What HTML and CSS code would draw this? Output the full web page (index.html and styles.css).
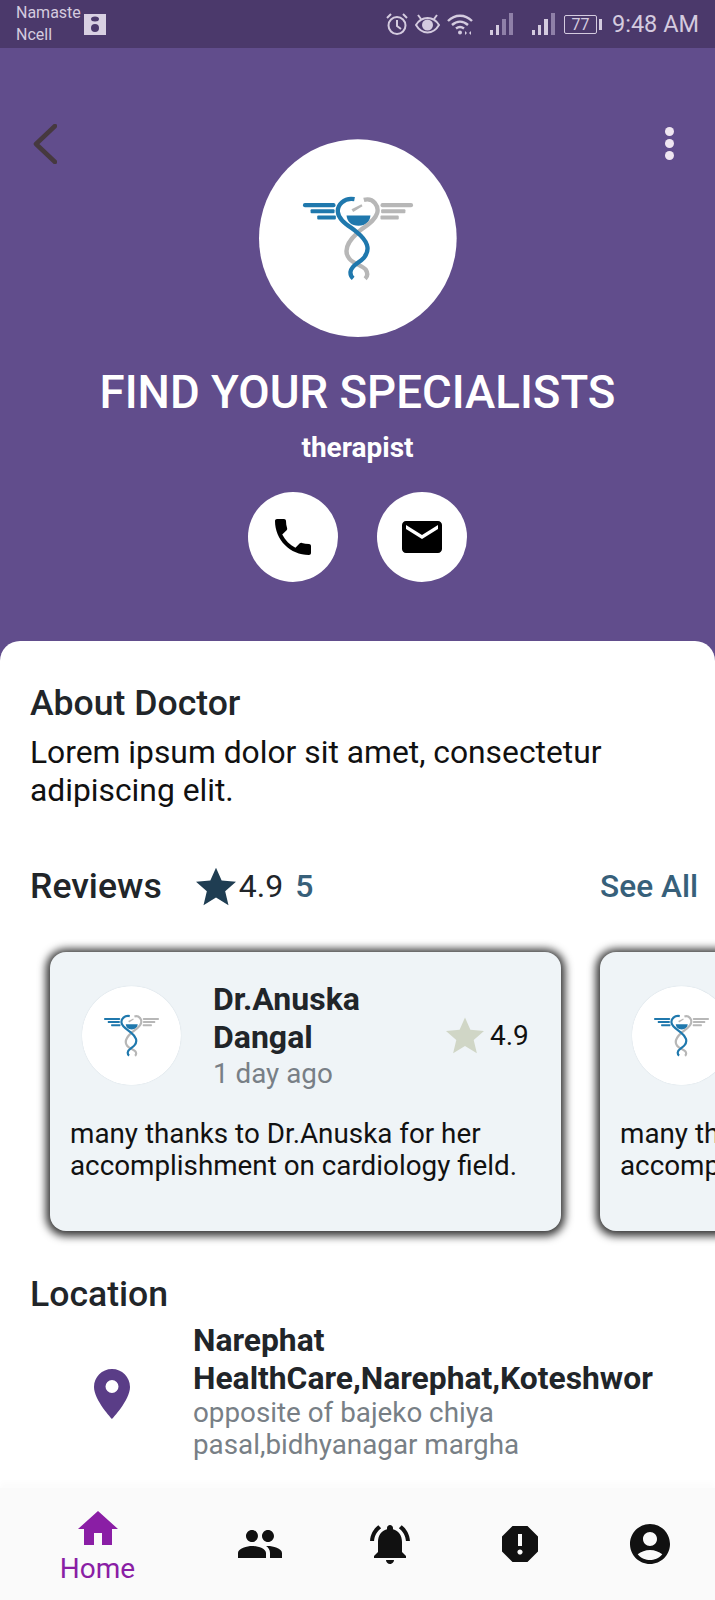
FILE: index.html
```html
<!DOCTYPE html>
<html lang="en">
<head>
    <meta charset="UTF-8">
    <meta name="viewport" content="width=device-width, initial-scale=1.0">
    <title>Find Your Specialists</title>
    <link rel="stylesheet" href="styles.css">
</head>
<body>
    <svg class="defs" width="0" height="0">
        <symbol id="logo" viewBox="25 27 595 595">
            <circle cx="322" cy="325" r="297" fill="#fff"/>
            <g fill="#1f78ad">
                <rect x="157" y="219" width="98" height="13" rx="6"/>
                <rect x="180" y="238" width="72" height="12" rx="3"/>
                <rect x="200" y="257" width="56" height="12" rx="3"/>
                <path d="M288 257h72c-2 18-14 31-36 31s-34-13-36-31z"/>
            </g>
            <g fill="#b7b7b7">
                <rect x="390" y="219" width="98" height="13" rx="6"/>
                <rect x="392" y="238" width="73" height="12" rx="3"/>
                <rect x="390" y="257" width="55" height="12" rx="3"/>
                <path d="M303 238l30-15 3 6-28 17z"/>
            </g>
            <path d="M340 210c30-8 46 20 40 40-8 28-40 40-60 60-26 24-44 50-24 76 14 18 40 20 50 34 7 11 5 20-2 27" fill="none" stroke="#b7b7b7" stroke-width="13"/>
            <path d="M312 208c-32-6-52 18-50 38 2 26 34 42 56 60 32 26 44 52 22 78-14 16-38 22-40 42-1 10 3 16 8 20" fill="none" stroke="#1f78ad" stroke-width="13"/>
        </symbol>
    </svg>

    <div class="status-bar">
        <div class="carrier">Namaste<br>Ncell</div>
        <svg class="sim" viewBox="0 0 22 21">
            <rect width="22" height="21" fill="#d8d0e2"/>
            <ellipse cx="11" cy="5" rx="4" ry="2.5" fill="#4b396b"/>
            <circle cx="11" cy="14" r="4" fill="#4b396b"/>
        </svg>
        <div class="status-icons">
            <svg class="st-alarm" viewBox="0 0 22 22" fill="none" stroke="#d4cbdf" stroke-width="2">
                <circle cx="11" cy="12.5" r="8.5"/>
                <path d="M11 7v6l4 3M1 5l4-4M21 5l-4-4"/>
            </svg>
            <svg class="st-eye" viewBox="0 0 25 20" fill="none" stroke="#d4cbdf" stroke-width="2">
                <path d="M1 11c3-5 7-7 11.500-7s8.500 2 11.500 7c-3 5-7 7.500-11.500 7.500S4 16 1 11z"/>
                <circle cx="12.500" cy="11" r="4.500" fill="#d4cbdf"/>
                <path d="M3 1l3 4M22 1l-3 4"/>
            </svg>
            <svg class="st-wifi" viewBox="0 0 26 21" fill="none" stroke="#d4cbdf" stroke-width="2.400">
                <path d="M1 7c7-7 17-7 24 0M5 11c5-4.500 11-4.500 16 0M9 14.500c2.500-2 5.500-2 8 0"/>
                <circle cx="13" cy="18.500" r="2" fill="#d4cbdf" stroke="none"/>
                <path d="M18 21v-4l2 2-2 2zM24 17v4l-2-2 2-2z" fill="#d4cbdf" stroke="none"/>
            </svg>
            <svg class="st-signal" viewBox="0 0 23 22">
                <rect x="0" y="17" width="3" height="5" fill="#d4cbdf"/>
                <rect x="6" y="12" width="3" height="10" fill="#d4cbdf"/>
                <rect x="12" y="6" width="4" height="16" fill="#8f80a8"/>
                <rect x="19" y="0" width="4" height="22" fill="#8f80a8"/>
            </svg>
            <svg class="st-signal st-signal-two" viewBox="0 0 23 22">
                <rect x="0" y="17" width="3" height="5" fill="#d4cbdf"/>
                <rect x="6" y="12" width="3" height="10" fill="#d4cbdf"/>
                <rect x="12" y="6" width="4" height="16" fill="#d4cbdf"/>
                <rect x="19" y="0" width="4" height="22" fill="#8f80a8"/>
            </svg>
            <div class="battery"><span class="battery-level">77</span><span class="battery-tip"></span></div>
            <span class="clock">9:48 AM</span>
        </div>
    </div>

    <header class="profile">
        <div class="profile-top">
            <svg class="back" viewBox="0 0 24 40" fill="none" stroke="#46393f" stroke-width="4.500" stroke-linecap="round" stroke-linejoin="round">
                <path d="M22 2L3 20l19 18"/>
            </svg>
            <svg class="avatar-big"><use href="#logo"/></svg>
            <div class="more"><span></span><span></span><span></span></div>
        </div>
        <h1>FIND YOUR SPECIALISTS</h1>
        <p class="role">therapist</p>
        <div class="actions">
            <div class="action">
                <svg viewBox="0 0 24 24"><path d="M6.620 10.790c1.440 2.830 3.760 5.140 6.590 6.590l2.200-2.200c.27-.27.67-.36 1.020-.24 1.120.37 2.330.57 3.570.57.55 0 1 .45 1 1V20c0 .55-.45 1-1 1-9.390 0-17-7.610-17-17 0-.55.45-1 1-1h3.500c.55 0 1 .45 1 1 0 1.250.2 2.450.57 3.570.11.35.03.74-.25 1.020l-2.200 2.200z"/></svg>
            </div>
            <div class="action">
                <svg viewBox="0 0 24 24"><path d="M20 4H4c-1.100 0-1.990.9-1.990 2L2 18c0 1.100.9 2 2 2h16c1.100 0 2-.9 2-2V6c0-1.100-.9-2-2-2zm0 4l-8 5-8-5V6l8 5 8-5v2z"/></svg>
            </div>
        </div>
    </header>

    <main class="sheet">
        <section class="about">
            <h2>About Doctor</h2>
            <p>Lorem ipsum dolor sit amet, consectetur adipiscing elit.</p>
        </section>

        <section class="reviews-head">
            <h2>Reviews</h2>
            <svg class="star-big" viewBox="0 0 24 24"><path d="M12 1l3.400 7.700 8.600.8-6.500 5.600 2 8.400L12 18.900l-7.500 4.600 2-8.400L0 9.500l8.600-.8z"/></svg>
            <span class="rating">4.9</span>
            <span class="count">5</span>
            <a class="see-all">See All</a>
        </section>

        <section class="cards">
            <article class="card">
                <div class="card-top">
                    <svg class="avatar-small"><use href="#logo"/></svg>
                    <div class="card-who">
                        <div class="card-name">Dr.Anuska Dangal</div>
                        <div class="card-when">1 day ago</div>
                    </div>
                    <svg class="star-small" viewBox="0 0 24 24"><path d="M12 1l3.400 7.700 8.600.8-6.500 5.600 2 8.400L12 18.900l-7.500 4.600 2-8.400L0 9.500l8.600-.8z"/></svg>
                    <span class="card-rating">4.9</span>
                </div>
                <p class="card-text">many thanks to Dr.Anuska for her accomplishment on cardiology field.</p>
            </article>
            <article class="card">
                <div class="card-top">
                    <svg class="avatar-small"><use href="#logo"/></svg>
                    <div class="card-who">
                        <div class="card-name">Dr.Anuska Dangal</div>
                        <div class="card-when">1 day ago</div>
                    </div>
                    <svg class="star-small" viewBox="0 0 24 24"><path d="M12 1l3.400 7.700 8.600.8-6.500 5.600 2 8.400L12 18.900l-7.500 4.600 2-8.400L0 9.500l8.600-.8z"/></svg>
                    <span class="card-rating">4.9</span>
                </div>
                <p class="card-text">many thanks to Dr.Anuska for her accomplishment on cardiology field.</p>
            </article>
        </section>

        <section class="location">
            <h2>Location</h2>
            <div class="place">
                <svg class="pin" viewBox="0 0 36 50"><path fill-rule="evenodd" d="M18 0C8 0 0 8 0 18c0 13 18 32 18 32s18-19 18-32C36 8 28 0 18 0zm0 24a6.500 6.500 0 1 1 0-13 6.500 6.500 0 0 1 0 13z"/></svg>
                <div class="place-text">
                    <div class="place-name">Narephat HealthCare,Narephat,Koteshwor</div>
                    <div class="place-sub">opposite of bajeko chiya pasal,bidhyanagar margha</div>
                </div>
            </div>
        </section>
    </main>

    <nav class="tabs">
        <div class="tab tab-active">
            <svg viewBox="0 0 24 24"><path d="M10 20v-6h4v6h5v-8h3L12 3 2 12h3v8z"/></svg>
            <span>Home</span>
        </div>
        <div class="tab">
            <svg viewBox="0 0 24 24"><path d="M16 11c1.660 0 2.990-1.340 2.990-3S17.660 5 16 5c-1.660 0-3 1.340-3 3s1.340 3 3 3zm-8 0c1.660 0 2.990-1.340 2.990-3S9.660 5 8 5C6.340 5 5 6.340 5 8s1.340 3 3 3zm0 2c-2.330 0-7 1.170-7 3.500V19h14v-2.500c0-2.330-4.670-3.500-7-3.500zm8 0c-.29 0-.62.02-.97.05 1.160.84 1.970 1.970 1.970 3.450V19h6v-2.500c0-2.330-4.670-3.500-7-3.500z"/></svg>
        </div>
        <div class="tab">
            <svg viewBox="0 0 24 24"><path d="M7.580 4.080L6.150 2.650C3.750 4.480 2.170 7.300 2.030 10.500h2c.15-2.650 1.510-4.970 3.550-6.420zm12.390 6.420h2c-.15-3.200-1.730-6.020-4.120-7.850l-1.420 1.430c2.020 1.450 3.390 3.770 3.540 6.420zM18 11c0-3.070-1.640-5.640-4.500-6.320V4c0-.83-.67-1.500-1.500-1.500s-1.500.67-1.500 1.500v.68C7.630 5.360 6 7.920 6 11v5l-2 2v1h16v-1l-2-2v-5zm-6 11c.14 0 .27-.01.4-.04.65-.14 1.180-.58 1.440-1.180.1-.24.15-.5.15-.78h-4c.01 1.100.9 2 2.010 2z"/></svg>
        </div>
        <div class="tab">
            <svg viewBox="0 0 24 24"><path d="M15.730 3H8.270L3 8.270v7.460L8.270 21h7.460L21 15.730V8.270L15.730 3zM12 17.300c-.72 0-1.300-.58-1.300-1.300 0-.72.58-1.300 1.300-1.300.72 0 1.300.58 1.300 1.300 0 .72-.58 1.300-1.300 1.300zm1-4.300h-2V7h2v6z"/></svg>
        </div>
        <div class="tab">
            <svg viewBox="0 0 24 24"><path d="M12 2C6.480 2 2 6.480 2 12s4.480 10 10 10 10-4.480 10-10S17.520 2 12 2zm0 4c1.930 0 3.500 1.570 3.500 3.500S13.930 13 12 13s-3.500-1.570-3.500-3.500S10.070 6 12 6zm0 14c-2.030 0-4.430-.82-6.140-2.880C7.550 15.800 9.680 15 12 15s4.450.8 6.140 2.120C16.430 19.180 14.030 20 12 20z"/></svg>
        </div>
    </nav>
</body>
</html>
```

FILE: styles.css
```css
* {
    box-sizing: border-box;
}
html, body {
    margin: 0;
    padding: 0;
}
body {
    width: 715px;
    height: 1600px;
    overflow: hidden;
    display: flex;
    flex-direction: column;
    font-family: Roboto, "Noto Sans", sans-serif;
    background-color: #fff;
    color: #212529;
}
.defs {
    position: absolute;
}

/* status bar */
.status-bar {
    height: 48px;
    flex: none;
    display: flex;
    align-items: center;
    padding: 0 16px;
    background-color: #4b396b;
    color: #d4cbdf;
}
.carrier {
    font-size: 16px;
    line-height: 22px;
}
.sim {
    width: 22px;
    height: 21px;
    margin-left: 3px;
}
.status-icons {
    margin-left: auto;
    display: flex;
    align-items: center;
}
.st-alarm {
    width: 22px;
    height: 22px;
}
.st-eye {
    width: 25px;
    height: 20px;
    margin-left: 7px;
}
.st-wifi {
    width: 26px;
    height: 21px;
    margin-left: 7px;
}
.st-signal {
    width: 23px;
    height: 22px;
    margin-left: 17px;
}
.st-signal-two {
    margin-left: 19px;
}
.battery {
    display: flex;
    align-items: center;
    margin-left: 9px;
}
.battery-level {
    width: 33px;
    height: 19px;
    border: 1px solid #d4cbdf;
    border-radius: 2px;
    font-size: 16px;
    line-height: 17px;
    text-align: center;
}
.battery-tip {
    width: 3px;
    height: 11px;
    margin-left: 2px;
    background-color: #d4cbdf;
}
.clock {
    margin-left: 10px;
    font-size: 23.500px;
}

/* purple header */
.profile {
    flex: none;
    height: 613px;
    padding-top: 76px;
    background-color: #614d8c;
    color: #fff;
    text-align: center;
}
.profile-top {
    display: grid;
    grid-template-columns: 1fr 198px 1fr;
    align-items: start;
    padding: 0 33px;
}
.back {
    width: 24px;
    height: 40px;
}
.avatar-big {
    grid-column: 2;
    width: 198px;
    height: 198px;
    margin-top: 15px;
}
.more {
    justify-self: end;
    display: flex;
    flex-direction: column;
    gap: 3px;
    margin: 3px 8px 0 0;
}
.more span {
    width: 9px;
    height: 9px;
    border-radius: 50%;
    background-color: #efe6f1;
}
.profile h1 {
    margin: 29px 0 0;
    font-size: 45.600px;
    line-height: 54px;
    font-weight: 500;
}
.role {
    margin: 13px 0 0;
    font-size: 28px;
    line-height: 30px;
    font-weight: 700;
}
.actions {
    display: flex;
    justify-content: center;
    gap: 39px;
    margin-top: 29px;
}
.action {
    width: 90px;
    height: 90px;
    border-radius: 50%;
    background-color: #fff;
    display: flex;
    align-items: center;
    justify-content: center;
}
.action svg {
    width: 48px;
    height: 48px;
}

/* white sheet */
.sheet {
    flex: 1;
    min-height: 0;
    margin-top: -20px;
    border-radius: 20px 20px 0 0;
    background-color: #fff;
    overflow: hidden;
}
h2 {
    margin: 0;
    font-size: 35.600px;
    line-height: 40px;
    font-weight: 500;
}
.about {
    padding: 42px 30px 0;
}
.about p {
    margin: 10px 0 0;
    font-size: 31.800px;
    line-height: 38px;
    color: #111;
}
.reviews-head {
    display: flex;
    align-items: center;
    margin-top: 57px;
    padding: 0 17px 0 30px;
}
.star-big {
    width: 40px;
    height: 40px;
    margin-left: 34px;
    fill: #1f3d52;
}
.rating {
    margin-left: 3px;
    font-size: 32px;
    color: #212529;
}
.count {
    margin-left: 12px;
    font-size: 32px;
    font-weight: 500;
    color: #37607a;
}
.see-all {
    margin-left: auto;
    font-size: 31.600px;
    font-weight: 500;
    color: #37607a;
}

/* review cards */
.cards {
    display: flex;
    gap: 39px;
    margin-top: 46px;
    padding-left: 50px;
}
.card {
    flex: none;
    width: 511px;
    height: 279px;
    padding: 28px 20px 0;
    border-radius: 16px;
    background-color: #eff4f7;
    box-shadow: 0 1px 8px 4px rgba(0, 0, 0, 0.8);
}
.card-top {
    display: flex;
    align-items: center;
    padding-left: 12px;
}
.avatar-small {
    flex: none;
    width: 99px;
    height: 99px;
    border-radius: 50%;
    box-shadow: 0 0 1px #c9d3da;
}
.card-who {
    flex: none;
    width: 165px;
    margin-left: 32px;
}
.card-name {
    font-size: 32px;
    line-height: 38px;
    font-weight: 700;
}
.card-when {
    margin-top: 2px;
    font-size: 27.800px;
    line-height: 32px;
    color: #787f86;
}
.star-small {
    flex: none;
    width: 38px;
    height: 38px;
    margin-left: 68px;
    fill: #d0d6c6;
}
.card-rating {
    margin-left: 6px;
    font-size: 28px;
    color: #111;
}
.card-text {
    margin: 28px 0 0;
    font-size: 27.800px;
    line-height: 32px;
    color: #111;
}

/* location */
.location {
    margin-top: 43px;
    padding: 0 30px;
}
.place {
    display: flex;
    align-items: center;
    margin-top: 7px;
}
.pin {
    flex: none;
    width: 36px;
    height: 50px;
    margin: 6px 0 0 64px;
    fill: #5a3d87;
}
.place-text {
    margin-left: 63px;
}
.place-name {
    font-size: 31.800px;
    line-height: 38px;
    font-weight: 700;
}
.place-sub {
    font-size: 27.800px;
    line-height: 32px;
    color: #787f86;
}

/* bottom tabs */
.tabs {
    flex: none;
    height: 112px;
    display: flex;
    background-color: #fafafa;
    box-shadow: 0 -6px 6px #fcfcfc;
    position: relative;
}
.tab {
    flex: 1;
    display: flex;
    flex-direction: column;
    align-items: center;
    justify-content: center;
    fill: #111;
}
.tab svg {
    width: 48px;
    height: 48px;
}
.tab-active {
    flex: 1.500;
    fill: #8a1ea5;
    color: #8a1ea5;
    justify-content: flex-start;
    padding-top: 17px;
}
.tab-active span {
    font-size: 28px;
    line-height: 32px;
}
```
